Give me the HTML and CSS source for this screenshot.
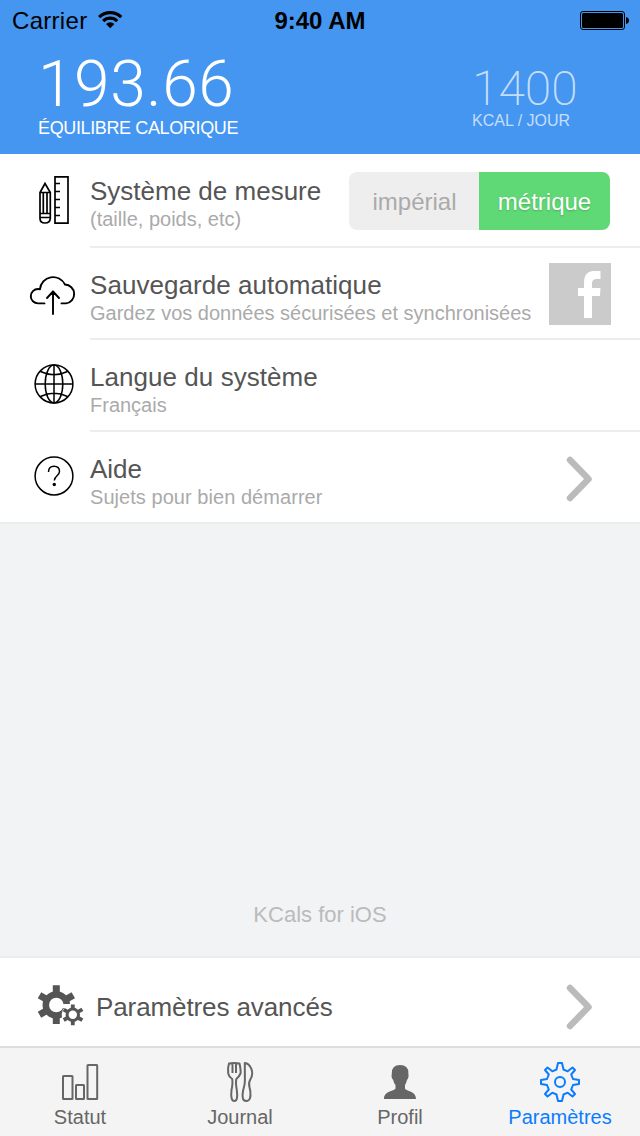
FILE: index.html
```html
<!DOCTYPE html>
<html lang="fr">
<head>
<meta charset="utf-8">
<title>Paramètres</title>
<link rel="stylesheet" href="styles.css">
</head>
<body>
<div class="app">
  <header class="header">
    <div class="status">
      <div class="carrier"><span class="carrier-name">Carrier</span>
        <svg class="wifi" width="27" height="20" viewBox="0 0 27 20"><path d="M1 5.900A17.500 17.500 0 0 1 25.400 5.900L23.100 8.200A14.200 14.200 0 0 0 3.300 8.200Z"/><path d="M5 9.900A11.700 11.700 0 0 1 21.400 9.900L19.100 12.200A8.400 8.400 0 0 0 7.300 12.200Z"/><path d="M9 14A5.900 5.900 0 0 1 17.400 14L13.200 18.200Z"/></svg>
      </div>
      <div class="clock">9:40 AM</div>
      <svg class="battery" width="50" height="19" viewBox="0 0 50 19"><rect x=".5" y=".5" width="44" height="18" rx="2.5" fill="none" stroke="#000"/><rect x="2" y="2" width="41" height="15" rx="1.5"/><path d="M46 6C50 6.5 50 12.500 46 13Z"/></svg>
    </div>
    <div class="stats">
      <div class="stat"><div class="balance">193.66</div><div class="balance-label">ÉQUILIBRE CALORIQUE</div></div>
      <div class="stat goal"><div class="target">1400</div><div class="target-label">KCAL / JOUR</div></div>
    </div>
  </header>
  <main class="main">
    <section class="list">
      <div class="row">
        <svg class="icon" width="90" height="92" viewBox="0 154 90 92" fill="none" stroke="#000" stroke-width="1.7"><path d="M55 176.800H68V223.200H55ZM55 183.500H60M55 191.500H60M55 199.500H60M55 207.500H60M55 215.500H60"/><path d="M45 183.500L40 192.500V218.500Q40 223 45 223T50.300 218.500V192.500ZM40 192.500H50.300M40 213.500H50.300M40 217.500H50.300M43.300 193V213M47 193V213"/></svg>
        <div class="cell"><div class="texts"><div class="title">Système de mesure</div><div class="sub">(taille, poids, etc)</div></div>
          <div class="switch"><div class="opt">impérial</div><div class="opt on">métrique</div></div></div>
      </div>
      <div class="row">
        <svg class="icon" width="90" height="92" viewBox="0 248 90 92" fill="none" stroke="#000" stroke-width="1.900" stroke-linecap="round" stroke-linejoin="round"><path d="M44.500 303.400H38A7.200 7.200 0 0 1 38 289Q39 289 40 289.200A13.200 13.200 0 0 1 65 284.500A9.500 9.500 0 0 1 66 303.400H61.500M53 314V291.500M47 298L53 291.500L59 298"/></svg>
        <div class="cell"><div class="texts"><div class="title spaced">Sauvegarde automatique</div><div class="sub">Gardez vos données sécurisées et synchronisées</div></div>
          <svg class="fb" width="62" height="62" viewBox="0 0 62 62"><path fill="#cbcbcb" d="M0 0H62V62H0Z"/><path fill="#fff" d="M35 55V33H29V25H35V20Q35 8 45 8H51.500V16H47.500Q43 16 43 20.500V25H51.500L51 33H43V55Z"/></svg></div>
      </div>
      <div class="row">
        <svg class="icon" width="90" height="92" viewBox="0 340 90 92" fill="none" stroke="#000" stroke-width="1.5"><circle cx="54" cy="384" r="18.900"/><ellipse cx="54" cy="384" rx="8.800" ry="18.900"/><path d="M54 365V403M35 384H73M40.500 371.500Q54 378 67.500 371.500M40.500 396.500Q54 390 67.500 396.500"/></svg>
        <div class="cell"><div class="texts"><div class="title spaced">Langue du système</div><div class="sub">Français</div></div></div>
      </div>
      <div class="row last">
        <svg class="icon" width="90" height="90" viewBox="0 432 90 90" fill="none" stroke="#000" stroke-width="1.500"><circle cx="54" cy="476" r="18.900"/><path d="M48.500 472Q48.500 466.200 54 466.200T59.500 471.500C59.500 475.500 54.300 476 54.300 480.500"/><circle cx="54.300" cy="484.500" r="1.700" fill="#000" stroke="none"/></svg>
        <div class="cell"><div class="texts"><div class="title">Aide</div><div class="sub spaced">Sujets pour bien démarrer</div></div>
          <svg class="chevron" width="28" height="46" viewBox="0 0 28 46"><path d="M4 4L22.500 23L4 42"/></svg></div>
      </div>
    </section>
    <div class="about">KCals for iOS</div>
    <section class="advanced">
      <svg class="gears" width="96" height="88" viewBox="0 958 96 88"><g fill="none" stroke="#555"><circle cx="56.300" cy="1005" r="10.500" stroke-width="6.500"/><path stroke-width="7" d="M56.300 993V985.300M56.300 1017V1024M46 999L39.500 995.300M66.600 999L73.300 995.300M46 1011L39.500 1014.700"/></g><circle cx="72.800" cy="1014.800" r="11" fill="#fff"/><path fill="#fff" d="M60 1004H76V1008H60Z"/><g fill="none" stroke="#555"><circle cx="72.800" cy="1014.800" r="5.700" stroke-width="3"/><path stroke-width="3.800" d="M72.800 1008.500V1004.500M72.800 1021V1025.300M67.300 1011.700L63.700 1009.600M78.300 1011.700L82.400 1009.400M67.300 1018L63.700 1020M78.300 1018L82.400 1020.200"/></g></svg>
      <div class="advanced-text">Paramètres avancés</div>
      <svg class="chevron" width="28" height="46" viewBox="0 0 28 46"><path d="M4 4L22.500 23L4 42"/></svg>
    </section>
  </main>
  <nav class="tabs">
    <div class="tab"><svg width="44" height="44" viewBox="58 1060 44 44" fill="none" stroke="#666" stroke-width="2"><rect x="63" y="1076" width="9.500" height="23" rx=".5"/><rect x="76" y="1085" width="8" height="14" rx=".5"/><rect x="87.500" y="1065" width="9.700" height="34" rx=".5"/></svg><span>Statut</span></div>
    <div class="tab"><svg width="44" height="44" viewBox="218 1060 44 44" fill="none" stroke="#666" stroke-width="2" stroke-linejoin="round"><path d="M229 1063.500Q234 1062.300 239.500 1063.500Q241 1070 240.500 1073.500Q239 1077 236.300 1079Q235.500 1083 236.800 1090Q238.300 1101 234.300 1101T231.500 1090Q233 1083 232.200 1079Q229 1077 228.200 1073.500Q227.500 1068 229 1063.500ZM232.500 1064V1073M236 1064V1073"/><path d="M244.800 1063C250 1063.500 255 1072 250.300 1079.500C247.500 1084 249.500 1086 250.300 1091Q251.500 1101 246.300 1101T243 1091C243.800 1087 245 1085 244.900 1080Z"/></svg><span>Journal</span></div>
    <div class="tab"><svg width="44" height="44" viewBox="378 1060 44 44" fill="#666"><path d="M400 1065Q408.800 1065 408.400 1073.500Q409 1078 407 1080Q406.300 1083 405 1085V1088.500C406 1091.500 416 1090.500 416 1099H384C384 1090.500 394 1091.500 395.500 1088.500V1085Q393.700 1083 393.200 1080Q391 1078 391.800 1073.500Q391.500 1065 400 1065Z"/></svg><span>Profil</span></div>
    <div class="tab active"><svg width="44" height="44" viewBox="538 1060 44 44" fill="none" stroke="#0a7cff" stroke-width="2" stroke-linejoin="round"><circle cx="560" cy="1082" r="5"/><path d="M558 1063H562L563.500 1069.500L567.700 1071.300L572.500 1067.500L575 1070L571.200 1074.500L573 1079L579 1080V1084L573 1085L571.200 1089.500L575 1094L572.500 1096.500L567.700 1092.700L563.500 1094.500L562 1101H558L556.500 1094.500L552.300 1092.700L547.500 1096.500L545 1094L548.800 1089.500L547 1085L541 1084V1080L547 1079L548.800 1074.500L545 1070L547.500 1067.500L552.300 1071.300L556.500 1069.500Z"/></svg><span>Paramètres</span></div>
  </nav>
</div>
</body>
</html>
```
FILE: styles.css
```css
* { box-sizing: border-box; }
body { margin: 0; font-family: "Liberation Sans", Arial, sans-serif; }
svg { display: block; flex: none; }
.app { width: 640px; height: 1136px; display: flex; flex-direction: column; background: #f1f3f5; overflow: hidden; white-space: nowrap; }

.header { height: 154px; background: #4596f0; color: #fff; }
.status { height: 40px; display: grid; grid-template-columns: 1fr auto 1fr; align-items: center; padding: 0 10px 0 12px; color: #000; font-size: 24px; line-height: 28px; }
.carrier { display: flex; align-items: center; gap: 10px; padding-top: 2px; }
.carrier-name { letter-spacing: .3px; }
.wifi { margin-top: -2px; }
.clock { font-weight: bold; padding-top: 2px; margin-left: -2px; }
.battery { justify-self: end; margin-top: 1px; }
.stats { display: flex; justify-content: space-between; padding: 0 60px 0 38px; }
.balance { font: 300 64px/56px Roboto, sans-serif; margin-top: 17px; letter-spacing: .6px; }
.balance-label { font-size: 18px; line-height: 20px; margin-top: 5px; letter-spacing: -.37px; }
.goal { width: 108px; color: rgba(255,255,255,.7); }
.target { font: 200 48px/40px Roboto, sans-serif; margin-top: 29px; }
.target-label { font-size: 16px; line-height: 18px; margin-top: 3px; }

.main { height: 892px; display: flex; flex-direction: column; }
.list { background: #fff; border-bottom: 2px solid #ebecec; }
.row { display: flex; height: 92px; }
.row:first-child { height: 94px; }
.row.last { height: 90px; }
.cell { flex: 1; display: flex; justify-content: space-between; border-bottom: 2px solid #ededed; }
.last .cell { border: 0; }
.texts { padding-top: 22px; }
.title { font-size: 26px; line-height: 30px; color: #555; }
.sub { font-size: 20px; line-height: 24px; margin-top: 1px; color: #aaa; }
.spaced { letter-spacing: .05px; }
.switch { display: flex; width: 261px; height: 58px; margin: 18px 30px 0 0; border-radius: 8px; overflow: hidden; font-size: 24px; line-height: 60px; text-align: center; }
.opt { width: 130px; padding-left: 1px; background: #eee; color: #aaa; }
.opt.on { width: 131px; padding-left: 0; background: #5fd975; color: #fff; text-shadow: 0 1px 2px rgba(0,0,0,.2); }
.fb { margin: 15px 29px 0 0; }
.chevron { fill: none; stroke: #bbb; stroke-width: 6.500px; stroke-linecap: round; stroke-linejoin: round; margin: 24px 46px 0 0; }
.about { flex: 1; display: flex; align-items: flex-end; justify-content: center; padding-bottom: 27px; font-size: 22px; line-height: 28px; color: #bbb; }
.advanced { height: 90px; border-top: 2px solid #ebecec; background: #fff; display: flex; }
.advanced .chevron { margin-top: 26px; }
.advanced-text { flex: 1; font-size: 26px; line-height: 98px; letter-spacing: -.1px; color: #555; }

.tabs { height: 90px; border-top: 2px solid #ddd; background: #f4f4f4; display: grid; grid-template-columns: repeat(4, 1fr); color: #666; font-size: 20px; line-height: 26px; }
.tab { display: flex; flex-direction: column; align-items: center; padding-top: 12px; }
.active { color: #0a7cff; }
```
